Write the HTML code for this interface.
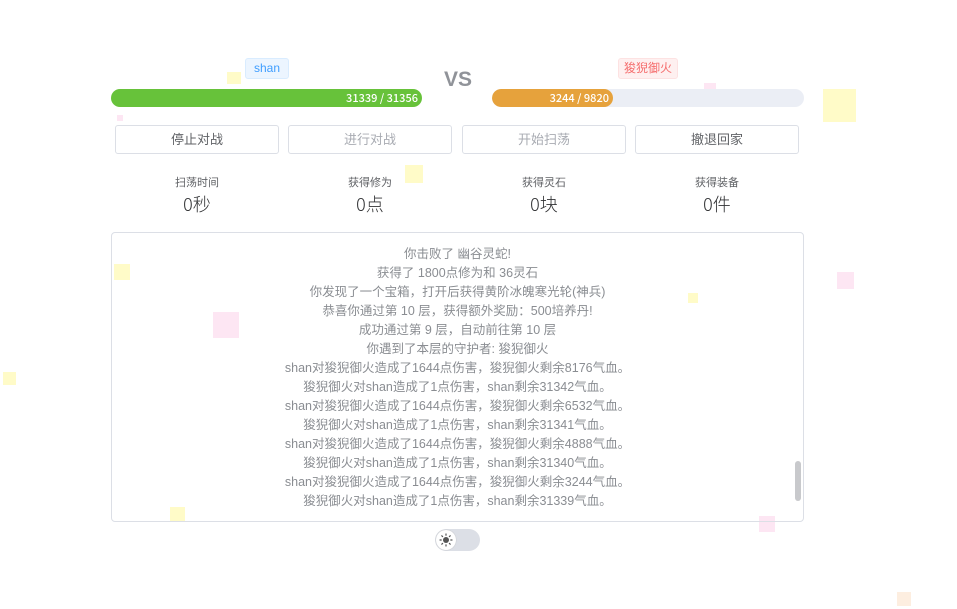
<!DOCTYPE html>
<html><head><meta charset="utf-8"><style>
*{margin:0;padding:0;box-sizing:border-box}
body{width:957px;height:609px;background:#fff;position:relative;overflow:hidden;font-family:"Liberation Sans","Noto Sans CJK SC",sans-serif;color:#606266}
.a{position:absolute}
.sq{position:absolute}
.y{background:#fffbc8}.p{background:#fde6f3}
.bar{position:absolute;height:18px;border-radius:9px;overflow:hidden}
.bar span{position:absolute;right:4px;top:0;line-height:18px;font-size:11px;color:#fff;font-family:"Noto Sans CJK SC",sans-serif;font-weight:500}
.btn{position:absolute;top:125px;height:29px;width:164px;border:1px solid #dcdfe6;border-radius:3px;text-align:center;line-height:27px;font-size:13px;background:#fff}
.st{position:absolute;top:175px;width:120px;text-align:center}
.st .l{font-size:11px;color:#606266;line-height:16px}
.st .v{font-size:18px;color:#303133;line-height:26px;margin-top:0px;font-family:"Noto Sans CJK SC",sans-serif;font-weight:300}
.log{position:absolute;left:111px;top:232px;width:693px;height:290px;border:1px solid #dcdfe6;border-radius:4px;text-align:center;font-size:12.5px;color:#8a8d92;line-height:19px}
</style></head><body>
<div class="sq y" style="left:227px;top:72px;width:14px;height:12px"></div>
<div class="sq p" style="left:117px;top:115px;width:6px;height:6px"></div>
<div class="sq y" style="left:405px;top:165px;width:18px;height:18px"></div>
<div class="sq y" style="left:823px;top:89px;width:33px;height:33px"></div>
<div class="sq p" style="left:704px;top:83px;width:12px;height:10px"></div>
<div class="sq y" style="left:114px;top:264px;width:16px;height:16px"></div>
<div class="sq p" style="left:213px;top:312px;width:26px;height:26px"></div>
<div class="sq p" style="left:837px;top:272px;width:17px;height:17px"></div>
<div class="sq y" style="left:688px;top:293px;width:10px;height:10px"></div>
<div class="sq y" style="left:3px;top:372px;width:13px;height:13px"></div>
<div class="sq y" style="left:170px;top:507px;width:15px;height:15px"></div>
<div class="sq p" style="left:759px;top:516px;width:16px;height:16px"></div>
<div class="sq" style="left:897px;top:592px;width:14px;height:14px;background:#fdeee0"></div>

<div class="a" style="left:245px;top:58px;width:44px;height:21px;background:#ecf5ff;border:1px solid #d9ecff;border-radius:3px;color:#409eff;font-size:12px;line-height:19px;text-align:center">shan</div>
<div class="a" style="left:618px;top:58px;width:60px;height:21px;background:#fef0f0;border:1px solid #fde2e2;border-radius:3px;color:#f56c6c;font-size:12px;line-height:19px;text-align:center">狻猊御火</div>
<div class="a" style="left:444px;top:68px;font-size:21px;font-weight:bold;color:#909399">VS</div>

<div class="bar" style="left:111px;top:89px;width:311px;background:#67c23a"><span>31339 / 31356</span></div>
<div class="bar" style="left:492px;top:89px;width:312px;background:#ebeef5"><div style="position:absolute;left:0;top:0;width:121px;height:18px;background:#e6a23c;border-radius:9px"><span>3244 / 9820</span></div></div>

<div class="btn" style="left:115px;color:#606266">停止对战</div>
<div class="btn" style="left:288px;color:#a8abb2">进行对战</div>
<div class="btn" style="left:462px;color:#a8abb2">开始扫荡</div>
<div class="btn" style="left:635px;color:#606266">撤退回家</div>

<div class="st" style="left:137px"><div class="l">扫荡时间</div><div class="v">0秒</div></div>
<div class="st" style="left:310px"><div class="l">获得修为</div><div class="v">0点</div></div>
<div class="st" style="left:484px"><div class="l">获得灵石</div><div class="v">0块</div></div>
<div class="st" style="left:657px"><div class="l">获得装备</div><div class="v">0件</div></div>

<div class="log" style="padding-top:12px">
你击败了 幽谷灵蛇!<br>获得了 1800点修为和 36灵石<br>你发现了一个宝箱，打开后获得黄阶冰魄寒光轮(神兵)<br>恭喜你通过第 10 层，获得额外奖励：500培养丹!<br>成功通过第 9 层，自动前往第 10 层<br>你遇到了本层的守护者: 狻猊御火<br>shan对狻猊御火造成了1644点伤害，狻猊御火剩余8176气血。<br>狻猊御火对shan造成了1点伤害，shan剩余31342气血。<br>shan对狻猊御火造成了1644点伤害，狻猊御火剩余6532气血。<br>狻猊御火对shan造成了1点伤害，shan剩余31341气血。<br>shan对狻猊御火造成了1644点伤害，狻猊御火剩余4888气血。<br>狻猊御火对shan造成了1点伤害，shan剩余31340气血。<br>shan对狻猊御火造成了1644点伤害，狻猊御火剩余3244气血。<br>狻猊御火对shan造成了1点伤害，shan剩余31339气血。
<div style="position:absolute;left:683px;top:228px;width:6px;height:40px;background:#c8c9cc;border-radius:3px"></div>
</div>

<div class="a" style="left:435px;top:529px;width:45px;height:22px;border-radius:11px;background:#dcdfe6"></div>
<div class="a" style="left:436px;top:530px;width:20px;height:20px;border-radius:10px;background:#fff;box-shadow:0 0 1px #aaa"></div>
<svg class="a" style="left:438px;top:532px" width="16" height="16" viewBox="0 0 16 16"><circle cx="8" cy="8" r="3" fill="#555"/><g stroke="#555" stroke-width="1.2" stroke-linecap="round"><path d="M8 2v1.2M8 12.8V14M2 8h1.2M12.8 8H14M3.8 3.8l.8.8M11.4 11.4l.8.8M3.8 12.2l.8-.8M11.4 4.6l.8-.8"/></g></svg>
</body></html>
